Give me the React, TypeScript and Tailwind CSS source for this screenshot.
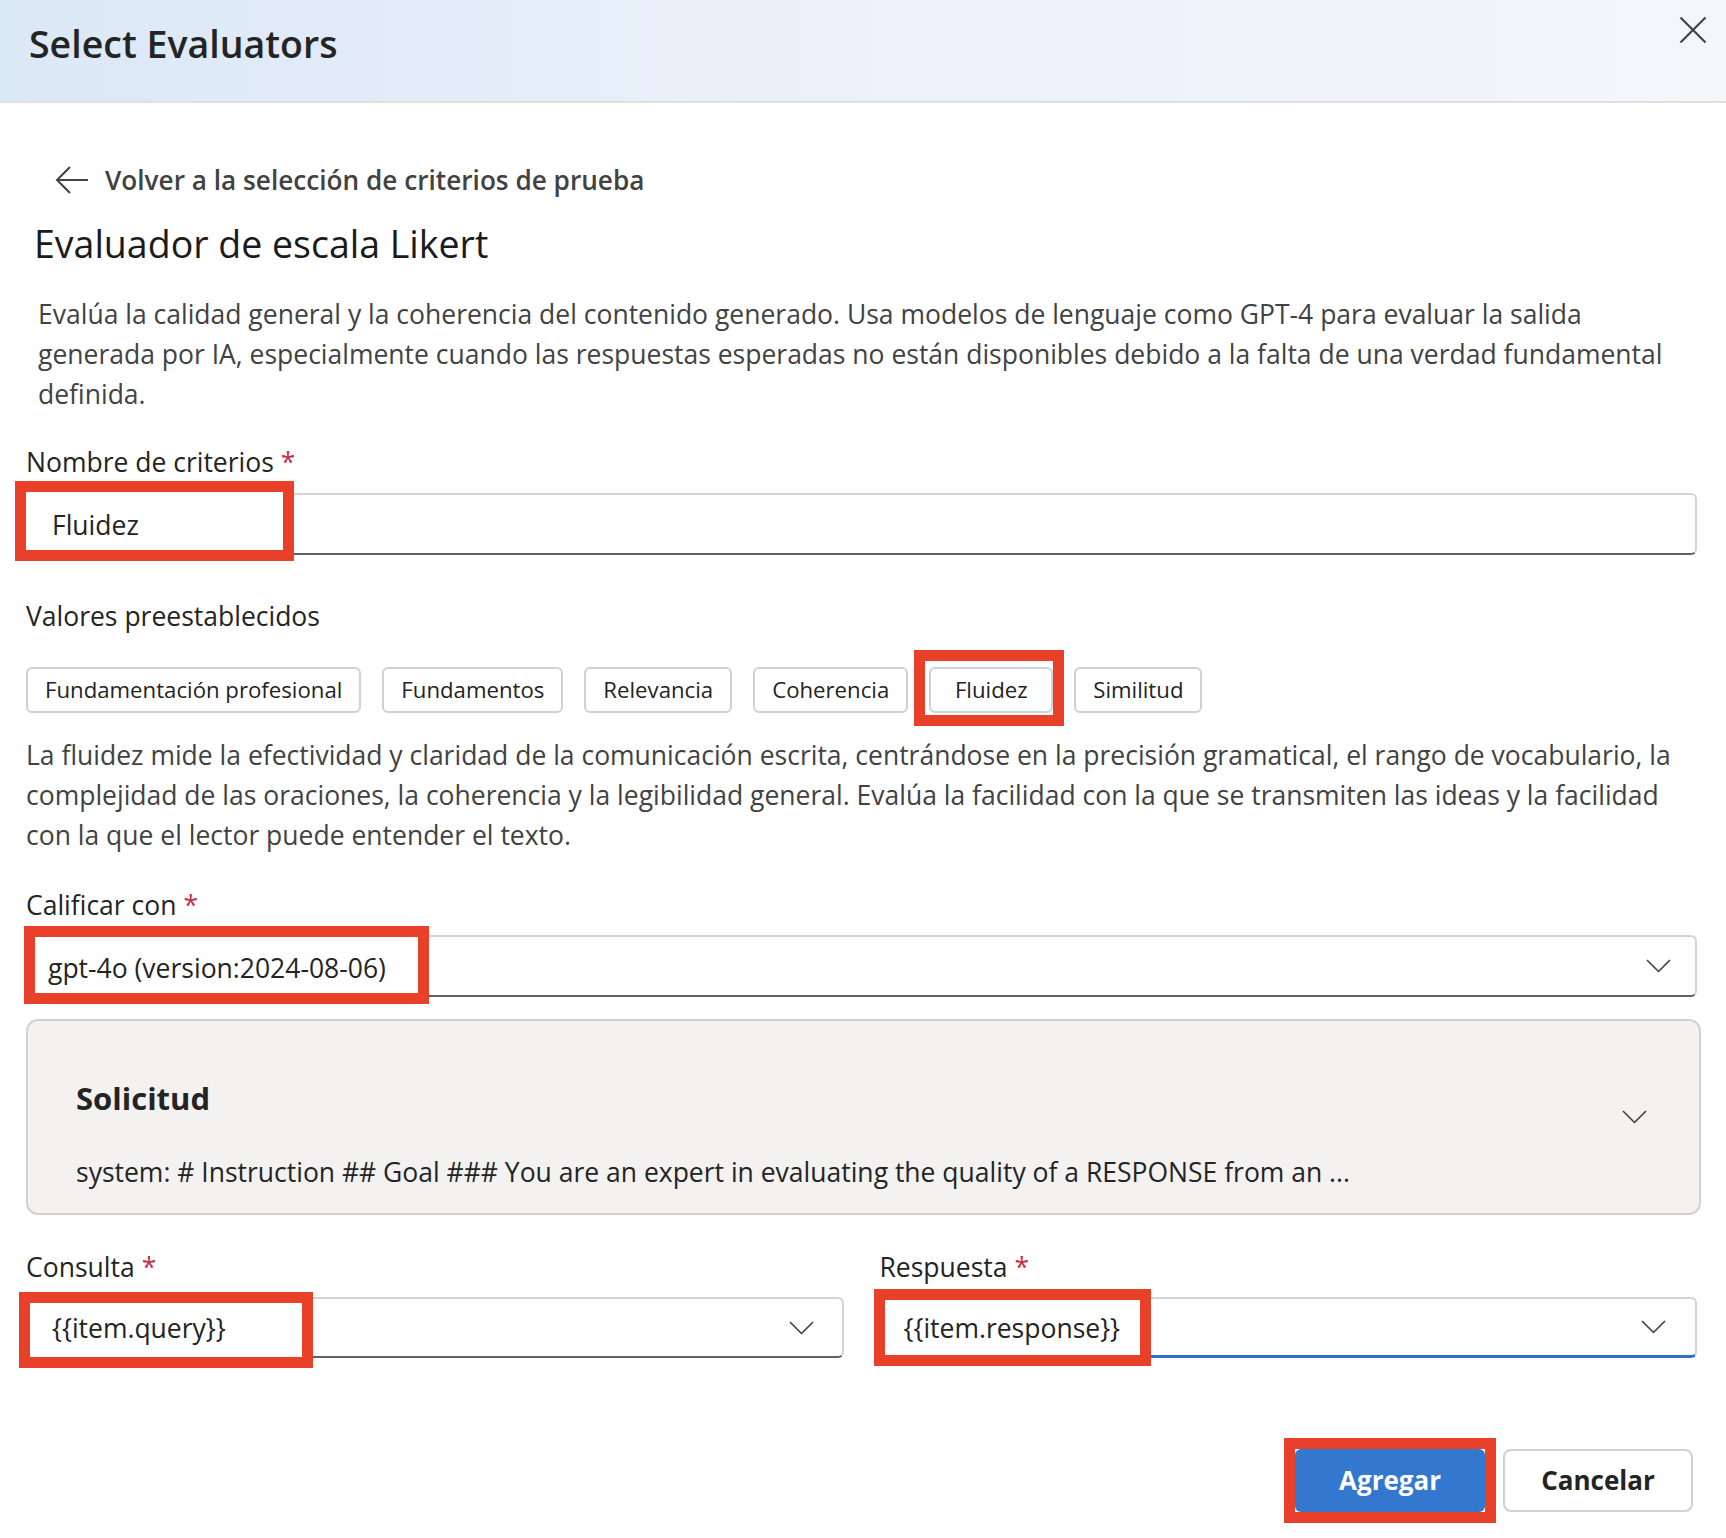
import React from 'react'

const FONT = "font-['Open_Sans','Noto_Sans',sans-serif]"

function Chevron({ className = '' }: { className?: string }) {
  return (
    <svg width="25" height="14" viewBox="0 0 25 14" fill="none" className={className}>
      <polyline points="1,1 12.5,12.5 24,1" stroke="#424242" strokeWidth="1.6" strokeLinejoin="round" />
    </svg>
  )
}

function Mark({ className }: { className: string }) {
  // red annotation frame drawn over the form
  return <div className={`pointer-events-none absolute z-10 border-[11px] border-[#e94129] ${className}`} />
}

function Label({ text }: { text: string }) {
  return (
    <div className="text-[26.5px] leading-[40px] text-[#242424]">
      {text}
      <span className="ml-[7px] text-[#c4314b]">*</span>
    </div>
  )
}

const presets = ['Fundamentación profesional', 'Fundamentos', 'Relevancia', 'Coherencia', 'Fluidez', 'Similitud']

export default function App() {
  return (
    <div className={`min-h-[1538px] w-full bg-white ${FONT}`}>
      {/* Header */}
      <div className="flex h-[103px] items-start justify-between border-b-2 border-[#e0e0e0] bg-linear-to-r from-[#dbe8f6] via-[#ebf1fa] to-[#f4f6fa] pl-[29px] pr-[19px]">
        <h1 className="pt-[20px] text-[37.5px] leading-[48px] font-semibold text-[#242424]">Select Evaluators</h1>
        <svg width="28" height="28" viewBox="0 0 28 28" className="mt-[16px]">
          <line x1="1.5" y1="1.5" x2="26.5" y2="26.5" stroke="#424242" strokeWidth="2.2" />
          <line x1="26.5" y1="1.5" x2="1.5" y2="26.5" stroke="#424242" strokeWidth="2.2" />
        </svg>
      </div>

      <div className="pl-[26px] pr-[29px]">
        {/* Back link */}
        <div className="mt-[60px] flex items-center gap-[16px] pl-[29px]">
          <svg width="34" height="30" viewBox="0 0 34 30" fill="none">
            <line x1="2" y1="15" x2="33" y2="15" stroke="#424242" strokeWidth="2" />
            <polyline points="15,2 2,15 15,28" stroke="#424242" strokeWidth="2" />
          </svg>
          <span className="text-[26.2px] leading-[34px] font-semibold text-[#424242]">
            Volver a la selección de criterios de prueba
          </span>
        </div>

        <h2 className="mt-[23px] pl-[8px] text-[37.5px] leading-[48px] text-[#1b1b1b]">Evaluador de escala Likert</h2>

        <p className="mt-[26px] pl-[12px] text-[26.5px] leading-[40px] text-[#424242]">
          Evalúa la calidad general y la coherencia del contenido generado. Usa modelos de lenguaje como GPT-4 para
          evaluar la salida generada por IA, especialmente cuando las respuestas esperadas no están disponibles debido a
          la falta de una verdad fundamental definida.
        </p>

        {/* Nombre de criterios */}
        <div className="mt-[28px]">
          <Label text="Nombre de criterios" />
          <div className="relative mt-[11px]">
            <div className="flex h-[62px] items-center rounded-[6px] border-2 border-[#d4d4d4] border-b-[#616161] bg-white pl-[24px] pt-[3px]">
              <span className="relative z-20 text-[26.5px] text-[#242424]">Fluidez</span>
            </div>
            <Mark className="-left-[11px] -top-[12px] h-[80px] w-[279px] bg-white" />
          </div>
        </div>

        {/* Valores preestablecidos */}
        <div className="mt-[41px] text-[26.5px] leading-[40px] text-[#242424]">Valores preestablecidos</div>
        <div className="mt-[31px] flex gap-[21px]">
          {presets.map((p) => (
            <div key={p} className="relative">
              <button
                className={`h-[46px] rounded-[6px] border-2 border-[#d1d1d1] bg-white px-[17px] text-[22.2px] text-[#242424] ${
                  p === 'Fluidez' ? 'min-w-[124px]' : ''
                }`}
              >
                {p}
              </button>
              {p === 'Fluidez' && <Mark className="-left-[15px] -top-[17px] h-[76px] w-[150px]" />}
            </div>
          ))}
        </div>

        <p className="mt-[22px] text-[26.5px] leading-[40px] text-[#424242]">
          La fluidez mide la efectividad y claridad de la comunicación escrita, centrándose en la precisión gramatical,
          el rango de vocabulario, la complejidad de las oraciones, la coherencia y la legibilidad general. Evalúa la
          facilidad con la que se transmiten las ideas y la facilidad con la que el lector puede entender el texto.
        </p>

        {/* Calificar con */}
        <div className="mt-[30px]">
          <Label text="Calificar con" />
          <div className="relative mt-[10px]">
            <div className="flex h-[62px] items-center justify-between rounded-[6px] border-2 border-[#d4d4d4] border-b-[#616161] bg-white pl-[20px] pr-[24px]">
              <span className="relative z-20 pt-[5px] text-[26.5px] text-[#242424]">gpt-4o (version:2024-08-06)</span>
              <Chevron />
            </div>
            <Mark className="-left-[2px] -top-[9px] h-[78px] w-[405px] bg-white" />
          </div>
        </div>

        {/* Solicitud */}
        <div className="mt-[22px] mr-[-4px] flex h-[196px] items-center justify-between rounded-[12px] border-2 border-[#d1d1d1] bg-[#f3f2f1] pl-[48px] pr-[52px]">
          <div className="flex flex-col gap-[34px] pt-[36px]">
            <div className="text-[31px] leading-[40px] font-bold text-[#242424]">Solicitud</div>
            <div className="text-[26.5px] leading-[40px] text-[#242424]">
              system: # Instruction ## Goal ### You are an expert in evaluating the quality of a RESPONSE from an ...
            </div>
          </div>
          <Chevron />
        </div>

        {/* Consulta / Respuesta */}
        <div className="mt-[32px] grid grid-cols-2 gap-x-[36px]">
          <div>
            <Label text="Consulta" />
            <div className="relative mt-[10px]">
              <div className="flex h-[61px] items-center justify-between rounded-[6px] border-2 border-[#d4d4d4] border-b-[#616161] bg-white pl-[24px] pr-[28px]">
                <span className="relative z-20 pt-[3px] text-[26.5px] text-[#242424]">{'{{item.query}}'}</span>
                <Chevron />
              </div>
              <Mark className="-left-[7px] -top-[5px] h-[76px] w-[294px] bg-white" />
            </div>
          </div>
          <div>
            <Label text="Respuesta" />
            <div className="relative mt-[10px]">
              <div className="flex h-[61px] items-center justify-between rounded-[6px] border-2 border-b-[3px] border-[#d4d4d4] border-b-[#2f6fce] bg-white pl-[22px] pr-[29px]">
                <span className="relative z-20 pt-[3px] text-[26.5px] text-[#242424]">{'{{item.response}}'}</span>
                <Chevron />
              </div>
              <Mark className="-left-[6px] -top-[8px] h-[77px] w-[277px] bg-white" />
            </div>
          </div>
        </div>

        {/* Actions */}
        <div className="mt-[91px] mr-[4px] flex justify-end gap-[18px]">
          <div className="relative">
            <button className="h-[63px] w-[190px] rounded-[6px] bg-[#3477cf] text-[26px] font-bold text-white">
              Agregar
            </button>
            <Mark className="-inset-[11px]" />
          </div>
          <button className="h-[63px] w-[190px] rounded-[8px] border-2 border-[#d1d1d1] bg-white text-[26px] font-bold text-[#242424]">
            Cancelar
          </button>
        </div>
      </div>
    </div>
  )
}
